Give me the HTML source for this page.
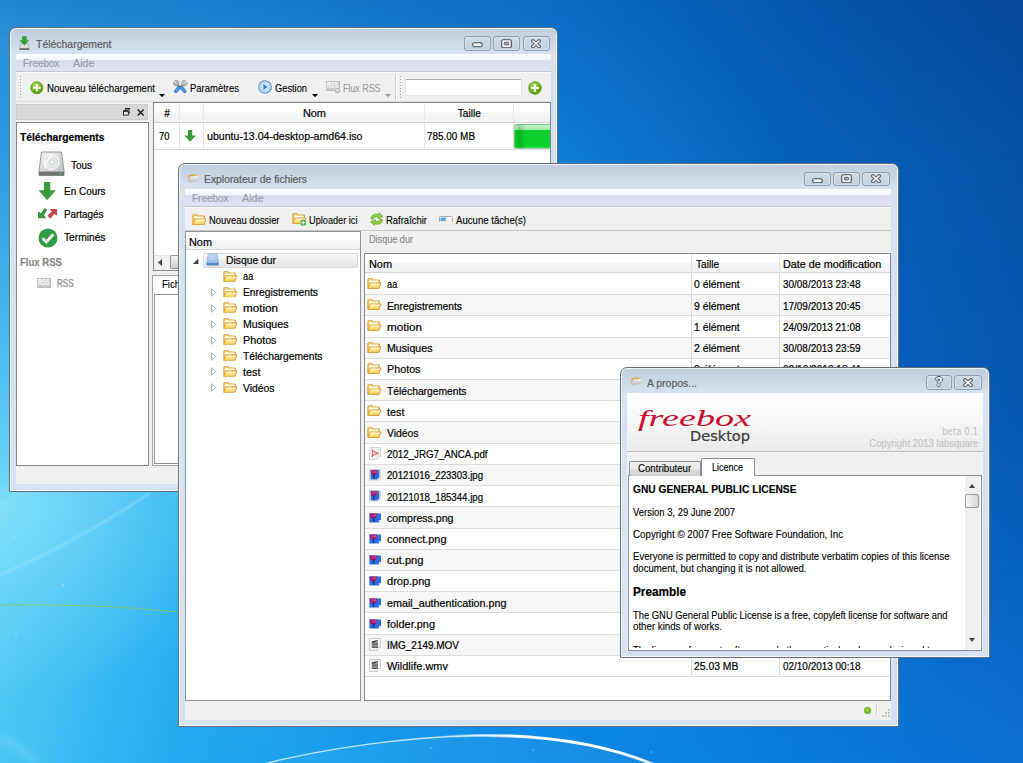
<!DOCTYPE html>
<html lang="fr"><head><meta charset="utf-8"><title>Freebox Desktop</title>
<style>
html,body{margin:0;padding:0}
body{width:1023px;height:763px;overflow:hidden;position:relative;
background:linear-gradient(90deg,#4cc6f5 0,#22aaf0 17.6%,#0d8de8 50%,#0a7bdc 78%,#0b70d2 100%);}
#bgm{left:0;top:0;width:1023px;height:763px;background:linear-gradient(90deg,#60d0f6 0,#36b6f0 17.6%,#1088e0 55%,#0868c4 77%,#0760bc 88%,#0658b3 100%);-webkit-mask-image:linear-gradient(to bottom,#000 0,#000 430px,transparent 763px);mask-image:linear-gradient(to bottom,#000 0,#000 430px,transparent 763px)}
#bgt{left:0;top:0;width:1023px;height:430px;background:linear-gradient(90deg,#1f86d2 0,#1479cc 29%,#0a6ac4 55%,#0556ae 78%,#064a97 100%);-webkit-mask-image:linear-gradient(to bottom,#000 0,rgba(0,0,0,.36) 165px,transparent 430px);mask-image:linear-gradient(to bottom,#000 0,rgba(0,0,0,.36) 165px,transparent 430px)}
#bgl{left:0;top:250px;width:400px;height:513px;background:radial-gradient(ellipse 300px 200px at -20px 250px,rgba(160,238,252,.6) 0,rgba(140,230,250,.3) 50%,rgba(120,220,250,0) 100%)}
div,span,svg{position:absolute;box-sizing:border-box}
span{white-space:pre;-webkit-text-stroke:.2px}
.win{border:1px solid #666c75;border-radius:7px 7px 1px 1px;background:linear-gradient(#bfcedd 0,#c8d5e4 10px,#d7e3f1 26px,#d6e2f0 40px,#d6e2f0 100%);box-shadow:inset 0 0 0 1px rgba(255,255,255,.8)}
.cl{background:#f0f0f0;overflow:hidden}
.mb{background:linear-gradient(#fdfeff 0,#f1f3fa 33%,#d7dbee 37%,#e1e5f5 91%,#c3c7d8 95%,#c3c7d8 100%)}
.cb{border:1px solid #8d9bb3;border-radius:3px;background:linear-gradient(#cfdae8,#c4d0e0);box-shadow:inset 0 0 0 1px rgba(255,255,255,.3)}
.hd{background:linear-gradient(#fff 0,#fff 45%,#f4f5f6 55%,#f1f2f4 100%);border-bottom:1px solid #d5d5d5}
.vs{width:1px;background:#e0e3e8}
</style></head><body>
<div id="bgm"></div><div id="bgt"></div><div id="bgl"></div><div style="left:0;top:28px;width:10px;height:472px;background:linear-gradient(#2590d8 0,#2a9be0 122px,#3fb5ea 272px,#62cef4 422px,#7adbf8 472px);-webkit-mask-image:linear-gradient(to bottom,transparent 0,#000 40px);mask-image:linear-gradient(to bottom,transparent 0,#000 40px)"></div>
<svg style="left:0px;top:0px;" width="1023" height="763" viewBox="0 0 1023 763" preserveAspectRatio="none">
<defs>
<linearGradient id="sw" gradientUnits="userSpaceOnUse" x1="440" y1="0" x2="655" y2="0"><stop offset="0" stop-color="#fff" stop-opacity="0"/><stop offset=".35" stop-color="#fff" stop-opacity=".9"/><stop offset=".8" stop-color="#fff" stop-opacity=".95"/><stop offset="1" stop-color="#fff" stop-opacity=".7"/></linearGradient><filter id="bl0" x="-10%" y="-50%" width="120%" height="200%"><feGaussianBlur stdDeviation=".6"/></filter>
<filter id="bl" x="-10%" y="-50%" width="120%" height="200%"><feGaussianBlur stdDeviation="1.2"/></filter>
<filter id="bl2" x="-10%" y="-50%" width="120%" height="200%"><feGaussianBlur stdDeviation="4"/></filter>
</defs>
<path d="M0 575 Q80 540 150 493" stroke="#d4f4fe" stroke-opacity=".42" stroke-width="1.6" fill="none" filter="url(#bl)"/>
<path d="M0 605 Q90 603 178 612" stroke="#86cf4e" stroke-opacity=".75" stroke-width="1" fill="none"/>
<path d="M255 766 C330 747 410 737 475 735.5 C540 734.5 600 742 658 766 Z" fill="#ffffff" fill-opacity=".05"/>
<path d="M255 766 C330 747 410 737 475 735.5 C540 734.5 600 742 658 766" stroke="#e8f6ff" stroke-opacity=".8" stroke-width="1.3" fill="none" filter="url(#bl0)"/>
<path d="M440 736.6 C455 736 465 735.7 475 735.5 C540 734.5 600 742 655 765" stroke="url(#sw)" stroke-width="3" fill="none" filter="url(#bl0)"/>
<path d="M0 738 Q22 746 36 763" stroke="#c6ecfc" stroke-opacity=".35" stroke-width="5" fill="none" filter="url(#bl2)"/>
<g fill="#fff" fill-opacity=".55"><circle cx="63" cy="585.5" r=".9"/><circle cx="15" cy="538" r=".7"/><circle cx="16" cy="634" r=".8"/><circle cx="2" cy="538" r=".6"/><circle cx="431" cy="748" r=".7"/><circle cx="533" cy="750" r=".7"/><circle cx="651" cy="752" r=".7"/></g>
</svg>
<div class="win" style="left:9px;top:27px;width:549px;height:464.5px;">
<svg style="left:9.4px;top:8px;" width="10.8" height="14.2" viewBox="0 0 10.8 14.2" preserveAspectRatio="none"><path d="M.7 10.6 L2 7.4 H8.8 L10.1 10.6 V12.6 H.7 Z" fill="#dedede" stroke="#a2a2a2" stroke-width=".7"/><rect x=".5" y="12.5" width="9.8" height="1.3" fill="#4c4c4c"/><path d="M3.1 .2 H7.7 V4.2 H10.2 L5.4 9.6 L.6 4.2 H3.1 Z" fill="#33a035"/></svg>
<span style='left:26.00px;top:8.00px;color:#5a5a5a;font:10.8px "Liberation Sans", sans-serif;line-height:15px;transform:translateY(0.71px) scaleX(0.9676);transform-origin:0 50%;'>Téléchargement</span>
<div class="cb" style="left:454px;top:8px;width:26.5px;height:14.5px;"></div>
<svg style="left:461.75px;top:14.3px;" width="11" height="5.4" viewBox="0 0 11 5.4" preserveAspectRatio="none"><rect x=".7" y=".7" width="9.6" height="4" rx="1.6" fill="#f6f7f9" stroke="#4a4f57" stroke-width="1.1"/></svg>
<div class="cb" style="left:483.3px;top:8px;width:26.5px;height:14.5px;"></div>
<svg style="left:491.05px;top:10.6px;" width="11" height="9.4" viewBox="0 0 11 9.4" preserveAspectRatio="none"><rect x=".7" y=".7" width="9.6" height="8" rx="1.4" fill="#f6f7f9" stroke="#4a4f57" stroke-width="1.1"/><rect x="3.4" y="3.3" width="4.2" height="2.6" rx=".5" fill="#aebccd" stroke="#4a4f57" stroke-width=".9"/></svg>
<div class="cb" style="left:512.5px;top:8px;width:27px;height:14.5px;"></div>
<svg style="left:520.0px;top:10.6px;" width="12" height="9.4" viewBox="0 0 12 9.4" preserveAspectRatio="none"><path d="M2.9 2 L9.1 7.4 M9.1 2 L2.9 7.4" stroke="#4a4f57" stroke-width="3.6" stroke-linecap="round"/><path d="M2.9 2 L9.1 7.4 M9.1 2 L2.9 7.4" stroke="#f6f7f9" stroke-width="1.7" stroke-linecap="round"/></svg>
<div class="cl" style="left:6px;top:26px;width:535px;height:430px;">
<div class="mb" style="left:0px;top:0px;width:535px;height:18px;"></div>
<span style='left:7.00px;top:2.00px;color:#9b9ba8;font:10.8px "Liberation Sans", sans-serif;line-height:15px;transform:translateY(0.01px) scaleX(0.9215);transform-origin:0 50%;'>Freebox</span>
<span style='left:57.00px;top:2.00px;color:#9b9ba8;font:10.8px "Liberation Sans", sans-serif;line-height:15px;transform:translateY(0.01px) scaleX(0.9942);transform-origin:0 50%;'>Aide</span>
<div style="left:0px;top:18px;width:535px;height:30px;background:#f0f0f0;border-top:1px solid #fafafa;border-bottom:1px solid #dcdcdc"></div>
<svg style="left:3.5px;top:22px;" width="3" height="24" viewBox="0 0 3 24" preserveAspectRatio="none"><rect x="0" y="0" width="1" height="1" fill="#a0a0a0"/><rect x="1" y="1" width="1" height="1" fill="#fff"/><rect x="0" y="3" width="1" height="1" fill="#a0a0a0"/><rect x="1" y="4" width="1" height="1" fill="#fff"/><rect x="0" y="6" width="1" height="1" fill="#a0a0a0"/><rect x="1" y="7" width="1" height="1" fill="#fff"/><rect x="0" y="9" width="1" height="1" fill="#a0a0a0"/><rect x="1" y="10" width="1" height="1" fill="#fff"/><rect x="0" y="12" width="1" height="1" fill="#a0a0a0"/><rect x="1" y="13" width="1" height="1" fill="#fff"/><rect x="0" y="15" width="1" height="1" fill="#a0a0a0"/><rect x="1" y="16" width="1" height="1" fill="#fff"/><rect x="0" y="18" width="1" height="1" fill="#a0a0a0"/><rect x="1" y="19" width="1" height="1" fill="#fff"/><rect x="0" y="21" width="1" height="1" fill="#a0a0a0"/><rect x="1" y="22" width="1" height="1" fill="#fff"/></svg>
<svg style="left:14.2px;top:26.7px;" width="13.6" height="13.6" viewBox="0 0 14 14" preserveAspectRatio="none"><defs><radialGradient id="gp" cx=".4" cy=".3" r=".8"><stop offset="0" stop-color="#b4e05a"/><stop offset=".6" stop-color="#6db31c"/><stop offset="1" stop-color="#4c8f10"/></radialGradient></defs>
<circle cx="7" cy="7" r="6.2" fill="url(#gp)" stroke="#4f9410" stroke-width=".9"/><path d="M3.2 7 H10.8 M7 3.2 V10.8" stroke="#fff" stroke-width="2"/></svg>
<span style='left:31.00px;top:26.00px;color:#000;font:10.6px "Liberation Sans", sans-serif;line-height:15px;transform:translateY(0.66px) scaleX(0.9124);transform-origin:0 50%;-webkit-text-stroke:.12px;'>Nouveau téléchargement</span>
<svg style="left:143px;top:39.8px;" width="6" height="3.5" viewBox="0 0 6 3.5" preserveAspectRatio="none"><path d="M0 0 H6 L3 3.2 Z" fill="#000"/></svg>
<svg style="left:157px;top:26.3px;" width="14.5" height="13.3" viewBox="0 0 14.5 13.3" preserveAspectRatio="none"><path d="M7.4 7.6 L3.8 4.4 M7.1 7.6 L10.7 4.4" stroke="#8a8a8a" stroke-width="2.4" stroke-linecap="round"/><circle cx="3.1" cy="3.1" r="2.7" fill="#b9b9b9" stroke="#858585" stroke-width=".7"/><path d="M3 3.2 L.2 1.4 L1.6 -.2 Z" fill="#f0f0f0"/><circle cx="11.4" cy="3.1" r="2.7" fill="#c2c2c2" stroke="#858585" stroke-width=".7"/><path d="M11.5 3.2 L14.3 1.4 L12.9 -.2 Z" fill="#f0f0f0"/><path d="M6.3 7.6 L2.7 11.2" stroke="#2f6fb4" stroke-width="3.5" stroke-linecap="round"/><path d="M6.3 7.6 L2.7 11.2" stroke="#4aa0ea" stroke-width="2.3" stroke-linecap="round"/><path d="M8.2 7.6 L11.8 11.2" stroke="#2f6fb4" stroke-width="3.5" stroke-linecap="round"/><path d="M8.2 7.6 L11.8 11.2" stroke="#4aa0ea" stroke-width="2.3" stroke-linecap="round"/></svg>
<span style='left:174.00px;top:26.00px;color:#000;font:10.6px "Liberation Sans", sans-serif;line-height:15px;transform:translateY(0.66px) scaleX(0.8947);transform-origin:0 50%;-webkit-text-stroke:.12px;'>Paramètres</span>
<svg style="left:241.7px;top:26.1px;" width="14" height="14" viewBox="0 0 14 14" preserveAspectRatio="none"><defs><radialGradient id="pg" cx=".5" cy=".4" r=".6"><stop offset="0" stop-color="#ffffff"/><stop offset="1" stop-color="#c4dcf5"/></radialGradient></defs><circle cx="7" cy="7" r="6.3" fill="url(#pg)" stroke="#4a8fd8" stroke-width="1.1"/><circle cx="7" cy="7" r="4.1" fill="#d7e8fa" stroke="#8ab8ea" stroke-width=".6"/><path d="M5.4 4.2 L9.6 7 L5.4 9.8 Z" fill="#2d7bd0"/></svg>
<span style='left:259.00px;top:26.00px;color:#000;font:10.6px "Liberation Sans", sans-serif;line-height:15px;transform:translateY(0.66px) scaleX(0.8763);transform-origin:0 50%;-webkit-text-stroke:.12px;'>Gestion</span>
<svg style="left:295.7px;top:39.8px;" width="6" height="3.5" viewBox="0 0 6 3.5" preserveAspectRatio="none"><path d="M0 0 H6 L3 3.2 Z" fill="#000"/></svg>
<div style="left:310px;top:26.5px;width:13.5px;height:10.4px;background:#cacaca;border:1px solid #bdbdbd"></div>
<span style='left:311.30px;top:25.00px;color:#fff;font:bold 8.6px "Liberation Sans", sans-serif;line-height:12px;transform:translateY(0.24px) scaleX(0.6225);transform-origin:0 50%;-webkit-text-stroke:0;'>RSS</span>
<svg style="left:317.5px;top:33px;" width="7" height="7" viewBox="0 0 7 7" preserveAspectRatio="none"><circle cx="3.5" cy="3.5" r="3" fill="#b4b4b4" stroke="#efefef" stroke-width=".7"/><path d="M1.8 2.8 H5.2 L3.5 5 Z" fill="#fff"/></svg>
<span style='left:327.00px;top:26.00px;color:#9a9a9a;font:10.6px "Liberation Sans", sans-serif;line-height:15px;transform:translateY(0.66px) scaleX(0.8380);transform-origin:0 50%;-webkit-text-stroke:.12px;'>Flux RSS</span>
<svg style="left:369px;top:39.8px;" width="6" height="3.5" viewBox="0 0 6 3.5" preserveAspectRatio="none"><path d="M0 0 H6 L3 3.2 Z" fill="#9a9a9a"/></svg>
<div style="left:379px;top:20px;width:1px;height:26px;background:#cfcfcf"></div>
<div style="left:380px;top:20px;width:1px;height:26px;background:#fff"></div>
<svg style="left:384px;top:22px;" width="3" height="24" viewBox="0 0 3 24" preserveAspectRatio="none"><rect x="0" y="0" width="1" height="1" fill="#a0a0a0"/><rect x="1" y="1" width="1" height="1" fill="#fff"/><rect x="0" y="3" width="1" height="1" fill="#a0a0a0"/><rect x="1" y="4" width="1" height="1" fill="#fff"/><rect x="0" y="6" width="1" height="1" fill="#a0a0a0"/><rect x="1" y="7" width="1" height="1" fill="#fff"/><rect x="0" y="9" width="1" height="1" fill="#a0a0a0"/><rect x="1" y="10" width="1" height="1" fill="#fff"/><rect x="0" y="12" width="1" height="1" fill="#a0a0a0"/><rect x="1" y="13" width="1" height="1" fill="#fff"/><rect x="0" y="15" width="1" height="1" fill="#a0a0a0"/><rect x="1" y="16" width="1" height="1" fill="#fff"/><rect x="0" y="18" width="1" height="1" fill="#a0a0a0"/><rect x="1" y="19" width="1" height="1" fill="#fff"/><rect x="0" y="21" width="1" height="1" fill="#a0a0a0"/><rect x="1" y="22" width="1" height="1" fill="#fff"/></svg>
<div style="left:389px;top:24.5px;width:117px;height:17.5px;background:#fff;border:1px solid #e1e4e8;border-top-color:#abadb3;border-radius:2px"></div>
<svg style="left:512.0px;top:26.5px;" width="14.0" height="14.0" viewBox="0 0 14 14" preserveAspectRatio="none"><defs><radialGradient id="gp" cx=".4" cy=".3" r=".8"><stop offset="0" stop-color="#b4e05a"/><stop offset=".6" stop-color="#6db31c"/><stop offset="1" stop-color="#4c8f10"/></radialGradient></defs>
<circle cx="7" cy="7" r="6.2" fill="url(#gp)" stroke="#4f9410" stroke-width=".9"/><path d="M3.2 7 H10.8 M7 3.2 V10.8" stroke="#fff" stroke-width="2"/></svg>
<div style="left:0px;top:50px;width:132px;height:16px;background:#d8d8d8;border:1px solid #cacaca"></div>
<svg style="left:106.8px;top:54.3px;" width="7.6" height="7.6" viewBox="0 0 7.6 7.6" preserveAspectRatio="none"><path d="M2.4 2.2 V.5 H7.1 V4.7 H5.4" fill="none" stroke="#1a1a1a" stroke-width=".9"/><rect x=".5" y="2.7" width="4.8" height="4.4" fill="#e8e8e8" stroke="#1a1a1a" stroke-width=".9"/><path d="M.5 3.1 H5.3 M2.4 .9 H7.1" stroke="#1a1a1a" stroke-width="1.2"/></svg>
<svg style="left:121px;top:54.6px;" width="7.4" height="7" viewBox="0 0 7.4 7" preserveAspectRatio="none"><path d="M.7 .5 L6.7 6.5 M6.7 .5 L.7 6.5" stroke="#111" stroke-width="1.3"/></svg>
<div style="left:0px;top:68px;width:132.5px;height:344px;background:#fff;border:1px solid #828790"></div>
<span style='left:3.70px;top:75.00px;color:#000;font:bold 10.8px "Liberation Sans", sans-serif;line-height:15px;transform:translateY(0.81px) scaleX(0.9514);transform-origin:0 50%;'>Téléchargements</span>
<svg style="left:22px;top:97px;" width="27" height="26" viewBox="0 0 27 26" preserveAspectRatio="none"><defs><linearGradient id="hd" x1="0" y1="0" x2="1" y2="1"><stop offset="0" stop-color="#f2f3f3"/><stop offset="1" stop-color="#b8bcbc"/></linearGradient></defs>
<path d="M3.5 1 H23.5 L26 20 V24.5 H1 V20 Z" fill="url(#hd)" stroke="#8b8f8f" stroke-width=".9"/>
<path d="M1 20 H26 V24.5 H1 Z" fill="#6f7474"/><path d="M1.5 20.3 H25.5" stroke="#d8dada" stroke-width=".7"/>
<circle cx="13.5" cy="11" r="7.6" fill="#e3e5e5" stroke="#fff" stroke-width="1"/><circle cx="13.5" cy="11" r="2" fill="#f8f8f8" stroke="#c0c4c4" stroke-width=".6"/>
<path d="M7 17.5 Q8 8 15 4" stroke="#fafafa" stroke-width="1.6" fill="none"/><rect x="21.5" y="22" width="2" height="1.2" fill="#5fd04a"/></svg>
<span style='left:55.00px;top:103.00px;color:#000;font:10.8px "Liberation Sans", sans-serif;line-height:15px;transform:translateY(0.71px) scaleX(0.9205);transform-origin:0 50%;'>Tous</span>
<svg style="left:22.4px;top:127.6px;" width="18.2" height="18.6" viewBox="0 0 20 20" preserveAspectRatio="none"><path d="M6.5 0 H13.5 V9 H19.5 L10 19.5 L0.5 9 H6.5 Z" fill="#3a9a3a"/></svg>
<span style='left:47.70px;top:130.00px;color:#000;font:10.8px "Liberation Sans", sans-serif;line-height:15px;transform:translateY(0.21px) scaleX(0.9219);transform-origin:0 50%;'>En Cours</span>
<svg style="left:22.1px;top:154.4px;" width="19.2" height="11" viewBox="0 0 19.2 11" preserveAspectRatio="none"><path d="M0 3.4 L3.1 5.2 L6.8 0 L9.3 2.1 L6 7.1 L8.1 10.2 L0 10.2 Z" fill="#3a9440"/><path d="M11.8 .9 L19 .9 L19 7.7 L16.2 5.8 L12.4 10.8 L9.3 7.7 L13.7 3.4 Z" fill="#c1474d"/></svg>
<span style='left:47.70px;top:153.00px;color:#000;font:10.8px "Liberation Sans", sans-serif;line-height:15px;transform:translateY(0.01px) scaleX(0.9140);transform-origin:0 50%;'>Partagés</span>
<svg style="left:21.5px;top:173.5px;" width="20" height="20" viewBox="0 0 20 20" preserveAspectRatio="none"><circle cx="10" cy="10" r="9.5" fill="#2f9e44"/><path d="M4.6 10.3 L8.3 14 L15.4 6.2" stroke="#fff" stroke-width="2.8" fill="none"/></svg>
<span style='left:47.70px;top:176.00px;color:#000;font:10.8px "Liberation Sans", sans-serif;line-height:15px;transform:translateY(0.01px) scaleX(0.9472);transform-origin:0 50%;'>Terminés</span>
<span style='left:3.70px;top:200.00px;color:#888;font:bold 10.8px "Liberation Sans", sans-serif;line-height:15px;transform:translateY(0.91px) scaleX(0.8860);transform-origin:0 50%;'>Flux RSS</span>
<div style="left:20.8px;top:223.6px;width:14px;height:10.6px;background:#cacaca;border:1px solid #bdbdbd"></div>
<span style='left:22.20px;top:222.00px;color:#fff;font:bold 8.6px "Liberation Sans", sans-serif;line-height:12px;transform:translateY(0.44px) scaleX(0.6451);transform-origin:0 50%;-webkit-text-stroke:0;'>RSS</span>
<span style='left:41.00px;top:221.00px;color:#8a8a8a;font:10.8px "Liberation Sans", sans-serif;line-height:15px;transform:translateY(0.91px) scaleX(0.7431);transform-origin:0 50%;'>RSS</span>
<div style="left:136.5px;top:48px;width:410px;height:168.6px;background:#fff;border:1px solid #828790"></div>
<div class="hd" style="left:137.5px;top:49px;width:408px;height:19.5px;"></div>
<div style="left:163px;top:50px;width:1px;height:18px;background:#e6e8ec"></div>
<div style="left:163px;top:69px;width:1px;height:26px;background:#e4e4e4"></div>
<div style="left:187px;top:50px;width:1px;height:18px;background:#e6e8ec"></div>
<div style="left:187px;top:69px;width:1px;height:26px;background:#e4e4e4"></div>
<div style="left:408px;top:50px;width:1px;height:18px;background:#e6e8ec"></div>
<div style="left:408px;top:69px;width:1px;height:26px;background:#e4e4e4"></div>
<div style="left:496.5px;top:50px;width:1px;height:18px;background:#e6e8ec"></div>
<div style="left:496.5px;top:69px;width:1px;height:26px;background:#e4e4e4"></div>
<div style="left:137.5px;top:94.8px;width:408px;height:1px;background:#dcdcdc"></div>
<span style='left:148.49px;top:52.00px;color:#000;font:10.8px "Liberation Sans", sans-serif;line-height:15px;transform:translateY(0.41px) scaleX(0.9300);transform-origin:50% 50%;'>#</span>
<span style='left:286.60px;top:52.00px;color:#000;font:10.8px "Liberation Sans", sans-serif;line-height:15px;transform:translateY(0.41px) scaleX(1.0089);transform-origin:50% 50%;'>Nom</span>
<span style='left:441.20px;top:52.00px;color:#000;font:10.8px "Liberation Sans", sans-serif;line-height:15px;transform:translateY(0.41px) scaleX(0.9346);transform-origin:50% 50%;'>Taille</span>
<span style='left:143.00px;top:75.00px;color:#000;font:10.8px "Liberation Sans", sans-serif;line-height:15px;transform:translateY(0.11px) scaleX(0.8739);transform-origin:0 50%;'>70</span>
<svg style="left:167.8px;top:76.3px;" width="12.2" height="12" viewBox="0 0 20 20" preserveAspectRatio="none"><path d="M6.5 0 H13.5 V9 H19.5 L10 19.5 L0.5 9 H6.5 Z" fill="#3a9a3a"/></svg>
<span style='left:191.00px;top:75.00px;color:#000;font:10.8px "Liberation Sans", sans-serif;line-height:15px;transform:translateY(0.11px) scaleX(0.9813);transform-origin:0 50%;'>ubuntu-13.04-desktop-amd64.iso</span>
<span style='left:411.00px;top:75.00px;color:#000;font:10.8px "Liberation Sans", sans-serif;line-height:15px;transform:translateY(0.11px) scaleX(0.9192);transform-origin:0 50%;'>785.00 MB</span>
<div style="left:497.8px;top:70px;width:40px;height:25.2px;background:linear-gradient(90deg,rgba(0,70,0,.05) 0,rgba(0,70,0,.22) 5px,rgba(0,70,0,0) 11px),linear-gradient(#c9f5cd 0,#a2eeab 20%,#12cf33 23%,#06d22a 90%,#3add55 100%);border:1px solid rgba(150,190,150,.6);border-radius:2px 0 0 2px"></div>
<div style="left:534px;top:49px;width:1px;height:167px;background:#828790"></div>
<div style="left:137.5px;top:200.5px;width:408px;height:15px;background:#efefef;border-top:1px solid #e3e3e3"></div>
<svg style="left:142px;top:204.5px;" width="4" height="7" viewBox="0 0 4 7" preserveAspectRatio="none"><path d="M4 0 V7 L0 3.5 Z" fill="#404040"/></svg>
<div style="left:153.5px;top:201px;width:40px;height:14px;background:linear-gradient(#f5f5f5,#e2e2e2 50%,#d0d0d0);border:1px solid #989898;border-radius:2px"></div>
<div style="left:136.2px;top:221.2px;width:410px;height:191px;background:#fff;border:1px solid #a0a3aa"></div>
<span style='left:146.00px;top:222.00px;color:#000;font:10.6px "Liberation Sans", sans-serif;line-height:15px;transform:translateY(0.96px) scaleX(0.9000);transform-origin:0 50%;-webkit-text-stroke:.12px;'>Fich</span>
<div style="left:138.3px;top:240.4px;width:404px;height:170px;background:#fff;border:1px solid #8e9199"></div>
</div>
</div>
<div class="win" style="left:178px;top:163px;width:720.5px;height:563.5px;">
<svg style="left:8.8px;top:10.2px;" width="11.4" height="8.8" viewBox="0 0 11.4 8.8" preserveAspectRatio="none"><defs><linearGradient id="tf" x1="0" y1="0" x2="0" y2="1"><stop offset="0" stop-color="#f6f6f6"/><stop offset="1" stop-color="#b9b9b9"/></linearGradient></defs><path d="M.3 8 L.5 1.2 L5 .3 L11 .9 L10.6 2 L2 3 Z" fill="#dba548"/><path d="M.8 8.4 L2 2.6 L10.9 1.6 L10.2 7 Z" fill="url(#tf)" stroke="#c9c9c9" stroke-width=".4"/></svg>
<span style='left:25.00px;top:8.00px;color:#5a5a5a;font:10.8px "Liberation Sans", sans-serif;line-height:15px;transform:translateY(0.01px) scaleX(0.9588);transform-origin:0 50%;'>Explorateur de fichiers</span>
<div class="cb" style="left:625.3px;top:7.5px;width:26.5px;height:14.5px;"></div>
<svg style="left:633.05px;top:13.8px;" width="11" height="5.4" viewBox="0 0 11 5.4" preserveAspectRatio="none"><rect x=".7" y=".7" width="9.6" height="4" rx="1.6" fill="#f6f7f9" stroke="#4a4f57" stroke-width="1.1"/></svg>
<div class="cb" style="left:654px;top:7.5px;width:26.5px;height:14.5px;"></div>
<svg style="left:661.75px;top:10.1px;" width="11" height="9.4" viewBox="0 0 11 9.4" preserveAspectRatio="none"><rect x=".7" y=".7" width="9.6" height="8" rx="1.4" fill="#f6f7f9" stroke="#4a4f57" stroke-width="1.1"/><rect x="3.4" y="3.3" width="4.2" height="2.6" rx=".5" fill="#aebccd" stroke="#4a4f57" stroke-width=".9"/></svg>
<div class="cb" style="left:683px;top:7.5px;width:27.5px;height:14.5px;"></div>
<svg style="left:690.75px;top:10.1px;" width="12" height="9.4" viewBox="0 0 12 9.4" preserveAspectRatio="none"><path d="M2.9 2 L9.1 7.4 M9.1 2 L2.9 7.4" stroke="#4a4f57" stroke-width="3.6" stroke-linecap="round"/><path d="M2.9 2 L9.1 7.4 M9.1 2 L2.9 7.4" stroke="#f6f7f9" stroke-width="1.7" stroke-linecap="round"/></svg>
<div class="cl" style="left:6px;top:25px;width:706px;height:530.5px;">
<div class="mb" style="left:0px;top:0px;width:706px;height:18.3px;"></div>
<span style='left:7.00px;top:2.00px;color:#9b9ba8;font:10.8px "Liberation Sans", sans-serif;line-height:15px;transform:translateY(0.21px) scaleX(0.9215);transform-origin:0 50%;'>Freebox</span>
<span style='left:57.00px;top:2.00px;color:#9b9ba8;font:10.8px "Liberation Sans", sans-serif;line-height:15px;transform:translateY(0.21px) scaleX(0.9942);transform-origin:0 50%;'>Aide</span>
<div style="left:0px;top:18.3px;width:706px;height:23.7px;background:#f0f0f0;border-top:1px solid #fafafa;border-bottom:1px solid #c6c6c6"></div>
<svg style="left:6.5px;top:24.5px;" width="14.8" height="11.2" viewBox="0 0 14.8 11.2" preserveAspectRatio="none"><defs><linearGradient id="fg" x1="0" y1="0" x2="0" y2="1"><stop offset="0" stop-color="#fff4b4"/><stop offset="1" stop-color="#f8d258"/></linearGradient></defs>
<path d="M.9 10 V1.7 Q.9 .8 1.8 .8 H4.6 Q5.4 .8 5.8 1.5 L6.2 2.1 H11.6 Q12.5 2.1 12.5 3 V5" fill="#f8dc86" stroke="#dba03a" stroke-width="1.1"/><path d="M2.2 4.6 V2.6 H11.2 V4.6" fill="#fffdf0" stroke="none"/>
<path d="M.9 10.5 L3 5 H14.1 L12 10.5 Z" fill="url(#fg)" stroke="#dca43e" stroke-width="1.1" stroke-linejoin="round"/><path d="M3.6 6.1 H12.8" stroke="#fffbe0" stroke-width=".8"/></svg>
<span style='left:23.80px;top:24.00px;color:#000;font:10.6px "Liberation Sans", sans-serif;line-height:15px;transform:translateY(0.06px) scaleX(0.8868);transform-origin:0 50%;-webkit-text-stroke:.12px;'>Nouveau dossier</span>
<svg style="left:106.5px;top:23.5px;" width="14.8" height="13.2" viewBox="0 0 14.8 13.2" preserveAspectRatio="none"><defs><linearGradient id="fg" x1="0" y1="0" x2="0" y2="1"><stop offset="0" stop-color="#fff4b4"/><stop offset="1" stop-color="#f8d258"/></linearGradient></defs>
<path d="M.9 10 V1.7 Q.9 .8 1.8 .8 H4.6 Q5.4 .8 5.8 1.5 L6.2 2.1 H11.6 Q12.5 2.1 12.5 3 V5" fill="#f8dc86" stroke="#dba03a" stroke-width="1.1"/><path d="M2.2 4.6 V2.6 H11.2 V4.6" fill="#fffdf0" stroke="none"/>
<path d="M.9 10.5 L3 5 H14.1 L12 10.5 Z" fill="url(#fg)" stroke="#dca43e" stroke-width="1.1" stroke-linejoin="round"/><path d="M3.6 6.1 H12.8" stroke="#fffbe0" stroke-width=".8"/><circle cx="11.4" cy="9.7" r="3.3" fill="#3fa52c" stroke="#e8f4e0" stroke-width=".5"/><path d="M9.5 9.7 H13.3 M11.4 7.8 V11.6" stroke="#fff" stroke-width="1.2"/></svg>
<span style='left:123.70px;top:24.00px;color:#000;font:10.6px "Liberation Sans", sans-serif;line-height:15px;transform:translateY(0.06px) scaleX(0.8668);transform-origin:0 50%;-webkit-text-stroke:.12px;'>Uploader ici</span>
<svg style="left:184.8px;top:22.6px;" width="13.6" height="14.4" viewBox="0 0 14 13" preserveAspectRatio="none"><path d="M1 6 Q2 1.5 7 2 L9.5 2.6 L9.2 .6 L13.4 4 L8.4 6.2 L8.9 4.4 Q4.6 3.6 3 6.8 Z" fill="#93d24a" stroke="#5ea322" stroke-width=".7"/><path d="M13 7 Q12 11.5 7 11 L4.5 10.4 L4.8 12.4 L.6 9 L5.6 6.8 L5.1 8.6 Q9.4 9.4 11 6.2 Z" fill="#93d24a" stroke="#5ea322" stroke-width=".7"/></svg>
<span style='left:201.00px;top:24.00px;color:#000;font:10.6px "Liberation Sans", sans-serif;line-height:15px;transform:translateY(0.06px) scaleX(0.8928);transform-origin:0 50%;-webkit-text-stroke:.12px;'>Rafraîchir</span>
<svg style="left:254.2px;top:26.6px;" width="13.8" height="6.8" viewBox="0 0 13.8 6.8" preserveAspectRatio="none"><rect x=".5" y=".5" width="12.8" height="5.8" rx=".8" fill="#fafbfc" stroke="#9aa0a8" stroke-width=".9"/><rect x="1.6" y="1.6" width="5.2" height="3.4" fill="#4a8fe0"/><path d="M2.6 1.6 L1.8 5 M4.4 1.6 L3.6 5 M6.2 1.6 L5.4 5" stroke="#8cbcf0" stroke-width=".6"/></svg>
<span style='left:271.00px;top:24.00px;color:#000;font:10.6px "Liberation Sans", sans-serif;line-height:15px;transform:translateY(0.06px) scaleX(0.9072);transform-origin:0 50%;-webkit-text-stroke:.12px;'>Aucune tâche(s)</span>
<div style="left:0px;top:41.8px;width:175.5px;height:469.8px;background:#fff;border:1px solid #8e929b"></div>
<div class="hd" style="left:1px;top:42.8px;width:173.5px;height:18.6px;"></div>
<span style='left:4.40px;top:45.00px;color:#000;font:10.8px "Liberation Sans", sans-serif;line-height:15px;transform:translateY(0.71px) scaleX(1.0089);transform-origin:0 50%;'>Nom</span>
<div style="left:17.8px;top:63.5px;width:155.7px;height:15.5px;background:linear-gradient(#f8f8f8,#e5e5e5);border:1px solid #d9d9d9;border-radius:2px"></div>
<svg style="left:8px;top:69.5px;" width="5.5" height="5.5" viewBox="0 0 5.5 5.5" preserveAspectRatio="none"><path d="M5 .3 V5 H.3 Z" fill="#404040" stroke="#262626" stroke-width=".6"/></svg>
<svg style="left:21.4px;top:64.2px;" width="13.2" height="13" viewBox="0 0 13.2 13" preserveAspectRatio="none"><defs><linearGradient id="dk" x1="0" y1="0" x2="0" y2="1"><stop offset="0" stop-color="#c3dcf3"/><stop offset="1" stop-color="#8ab6e4"/></linearGradient></defs><path d="M2.3 .8 H10.9 L12.6 9.6 V12.2 H.6 V9.6 Z" fill="url(#dk)" stroke="#86acd6" stroke-width=".7"/><path d="M.8 9.9 H12.4 V12.2 H.8 Z" fill="#5688c2"/><circle cx="6.6" cy="5.6" r=".9" fill="#dcebf8"/></svg>
<span style='left:40.50px;top:63.00px;color:#000;font:10.8px "Liberation Sans", sans-serif;line-height:15px;transform:translateY(0.91px) scaleX(0.9575);transform-origin:0 50%;'>Disque dur</span>
<svg style="left:38.3px;top:81.6px;" width="14.504" height="10.975999999999999" viewBox="0 0 14.8 11.2" preserveAspectRatio="none"><defs><linearGradient id="fg" x1="0" y1="0" x2="0" y2="1"><stop offset="0" stop-color="#fff4b4"/><stop offset="1" stop-color="#f8d258"/></linearGradient></defs>
<path d="M.9 10 V1.7 Q.9 .8 1.8 .8 H4.6 Q5.4 .8 5.8 1.5 L6.2 2.1 H11.6 Q12.5 2.1 12.5 3 V5" fill="#f8dc86" stroke="#dba03a" stroke-width="1.1"/><path d="M2.2 4.6 V2.6 H11.2 V4.6" fill="#fffdf0" stroke="none"/>
<path d="M.9 10.5 L3 5 H14.1 L12 10.5 Z" fill="url(#fg)" stroke="#dca43e" stroke-width="1.1" stroke-linejoin="round"/><path d="M3.6 6.1 H12.8" stroke="#fffbe0" stroke-width=".8"/></svg>
<span style='left:58.00px;top:80.00px;color:#000;font:10.8px "Liberation Sans", sans-serif;line-height:15px;transform:translateY(0.11px) scaleX(0.8572);transform-origin:0 50%;'>aa</span>
<svg style="left:38.3px;top:97.53px;" width="14.504" height="10.975999999999999" viewBox="0 0 14.8 11.2" preserveAspectRatio="none"><defs><linearGradient id="fg" x1="0" y1="0" x2="0" y2="1"><stop offset="0" stop-color="#fff4b4"/><stop offset="1" stop-color="#f8d258"/></linearGradient></defs>
<path d="M.9 10 V1.7 Q.9 .8 1.8 .8 H4.6 Q5.4 .8 5.8 1.5 L6.2 2.1 H11.6 Q12.5 2.1 12.5 3 V5" fill="#f8dc86" stroke="#dba03a" stroke-width="1.1"/><path d="M2.2 4.6 V2.6 H11.2 V4.6" fill="#fffdf0" stroke="none"/>
<path d="M.9 10.5 L3 5 H14.1 L12 10.5 Z" fill="url(#fg)" stroke="#dca43e" stroke-width="1.1" stroke-linejoin="round"/><path d="M3.6 6.1 H12.8" stroke="#fffbe0" stroke-width=".8"/></svg>
<span style='left:58.00px;top:96.00px;color:#000;font:10.8px "Liberation Sans", sans-serif;line-height:15px;transform:translateY(0.04px) scaleX(0.9539);transform-origin:0 50%;'>Enregistrements</span>
<svg style="left:26px;top:98.83px;" width="5.5" height="9" viewBox="0 0 5.5 9" preserveAspectRatio="none"><path d="M.6 .8 L4.6 4.5 L.6 8.2 Z" fill="#fff" stroke="#a5a5a5" stroke-width=".9"/></svg>
<svg style="left:38.3px;top:113.46px;" width="14.504" height="10.975999999999999" viewBox="0 0 14.8 11.2" preserveAspectRatio="none"><defs><linearGradient id="fg" x1="0" y1="0" x2="0" y2="1"><stop offset="0" stop-color="#fff4b4"/><stop offset="1" stop-color="#f8d258"/></linearGradient></defs>
<path d="M.9 10 V1.7 Q.9 .8 1.8 .8 H4.6 Q5.4 .8 5.8 1.5 L6.2 2.1 H11.6 Q12.5 2.1 12.5 3 V5" fill="#f8dc86" stroke="#dba03a" stroke-width="1.1"/><path d="M2.2 4.6 V2.6 H11.2 V4.6" fill="#fffdf0" stroke="none"/>
<path d="M.9 10.5 L3 5 H14.1 L12 10.5 Z" fill="url(#fg)" stroke="#dca43e" stroke-width="1.1" stroke-linejoin="round"/><path d="M3.6 6.1 H12.8" stroke="#fffbe0" stroke-width=".8"/></svg>
<span style='left:58.00px;top:111.00px;color:#000;font:10.8px "Liberation Sans", sans-serif;line-height:15px;transform:translateY(0.97px) scaleX(1.0795);transform-origin:0 50%;'>motion</span>
<svg style="left:26px;top:114.76px;" width="5.5" height="9" viewBox="0 0 5.5 9" preserveAspectRatio="none"><path d="M.6 .8 L4.6 4.5 L.6 8.2 Z" fill="#fff" stroke="#a5a5a5" stroke-width=".9"/></svg>
<svg style="left:38.3px;top:129.39px;" width="14.504" height="10.975999999999999" viewBox="0 0 14.8 11.2" preserveAspectRatio="none"><defs><linearGradient id="fg" x1="0" y1="0" x2="0" y2="1"><stop offset="0" stop-color="#fff4b4"/><stop offset="1" stop-color="#f8d258"/></linearGradient></defs>
<path d="M.9 10 V1.7 Q.9 .8 1.8 .8 H4.6 Q5.4 .8 5.8 1.5 L6.2 2.1 H11.6 Q12.5 2.1 12.5 3 V5" fill="#f8dc86" stroke="#dba03a" stroke-width="1.1"/><path d="M2.2 4.6 V2.6 H11.2 V4.6" fill="#fffdf0" stroke="none"/>
<path d="M.9 10.5 L3 5 H14.1 L12 10.5 Z" fill="url(#fg)" stroke="#dca43e" stroke-width="1.1" stroke-linejoin="round"/><path d="M3.6 6.1 H12.8" stroke="#fffbe0" stroke-width=".8"/></svg>
<span style='left:58.00px;top:127.00px;color:#000;font:10.8px "Liberation Sans", sans-serif;line-height:15px;transform:translateY(0.90px) scaleX(0.9844);transform-origin:0 50%;'>Musiques</span>
<svg style="left:26px;top:130.69px;" width="5.5" height="9" viewBox="0 0 5.5 9" preserveAspectRatio="none"><path d="M.6 .8 L4.6 4.5 L.6 8.2 Z" fill="#fff" stroke="#a5a5a5" stroke-width=".9"/></svg>
<svg style="left:38.3px;top:145.32px;" width="14.504" height="10.975999999999999" viewBox="0 0 14.8 11.2" preserveAspectRatio="none"><defs><linearGradient id="fg" x1="0" y1="0" x2="0" y2="1"><stop offset="0" stop-color="#fff4b4"/><stop offset="1" stop-color="#f8d258"/></linearGradient></defs>
<path d="M.9 10 V1.7 Q.9 .8 1.8 .8 H4.6 Q5.4 .8 5.8 1.5 L6.2 2.1 H11.6 Q12.5 2.1 12.5 3 V5" fill="#f8dc86" stroke="#dba03a" stroke-width="1.1"/><path d="M2.2 4.6 V2.6 H11.2 V4.6" fill="#fffdf0" stroke="none"/>
<path d="M.9 10.5 L3 5 H14.1 L12 10.5 Z" fill="url(#fg)" stroke="#dca43e" stroke-width="1.1" stroke-linejoin="round"/><path d="M3.6 6.1 H12.8" stroke="#fffbe0" stroke-width=".8"/></svg>
<span style='left:58.00px;top:143.00px;color:#000;font:10.8px "Liberation Sans", sans-serif;line-height:15px;transform:translateY(0.83px) scaleX(0.9963);transform-origin:0 50%;'>Photos</span>
<svg style="left:26px;top:146.62px;" width="5.5" height="9" viewBox="0 0 5.5 9" preserveAspectRatio="none"><path d="M.6 .8 L4.6 4.5 L.6 8.2 Z" fill="#fff" stroke="#a5a5a5" stroke-width=".9"/></svg>
<svg style="left:38.3px;top:161.25px;" width="14.504" height="10.975999999999999" viewBox="0 0 14.8 11.2" preserveAspectRatio="none"><defs><linearGradient id="fg" x1="0" y1="0" x2="0" y2="1"><stop offset="0" stop-color="#fff4b4"/><stop offset="1" stop-color="#f8d258"/></linearGradient></defs>
<path d="M.9 10 V1.7 Q.9 .8 1.8 .8 H4.6 Q5.4 .8 5.8 1.5 L6.2 2.1 H11.6 Q12.5 2.1 12.5 3 V5" fill="#f8dc86" stroke="#dba03a" stroke-width="1.1"/><path d="M2.2 4.6 V2.6 H11.2 V4.6" fill="#fffdf0" stroke="none"/>
<path d="M.9 10.5 L3 5 H14.1 L12 10.5 Z" fill="url(#fg)" stroke="#dca43e" stroke-width="1.1" stroke-linejoin="round"/><path d="M3.6 6.1 H12.8" stroke="#fffbe0" stroke-width=".8"/></svg>
<span style='left:58.00px;top:159.00px;color:#000;font:10.8px "Liberation Sans", sans-serif;line-height:15px;transform:translateY(0.76px) scaleX(0.9530);transform-origin:0 50%;'>Téléchargements</span>
<svg style="left:26px;top:162.55px;" width="5.5" height="9" viewBox="0 0 5.5 9" preserveAspectRatio="none"><path d="M.6 .8 L4.6 4.5 L.6 8.2 Z" fill="#fff" stroke="#a5a5a5" stroke-width=".9"/></svg>
<svg style="left:38.3px;top:177.18px;" width="14.504" height="10.975999999999999" viewBox="0 0 14.8 11.2" preserveAspectRatio="none"><defs><linearGradient id="fg" x1="0" y1="0" x2="0" y2="1"><stop offset="0" stop-color="#fff4b4"/><stop offset="1" stop-color="#f8d258"/></linearGradient></defs>
<path d="M.9 10 V1.7 Q.9 .8 1.8 .8 H4.6 Q5.4 .8 5.8 1.5 L6.2 2.1 H11.6 Q12.5 2.1 12.5 3 V5" fill="#f8dc86" stroke="#dba03a" stroke-width="1.1"/><path d="M2.2 4.6 V2.6 H11.2 V4.6" fill="#fffdf0" stroke="none"/>
<path d="M.9 10.5 L3 5 H14.1 L12 10.5 Z" fill="url(#fg)" stroke="#dca43e" stroke-width="1.1" stroke-linejoin="round"/><path d="M3.6 6.1 H12.8" stroke="#fffbe0" stroke-width=".8"/></svg>
<span style='left:58.00px;top:175.00px;color:#000;font:10.8px "Liberation Sans", sans-serif;line-height:15px;transform:translateY(0.69px) scaleX(1.0054);transform-origin:0 50%;'>test</span>
<svg style="left:26px;top:178.48px;" width="5.5" height="9" viewBox="0 0 5.5 9" preserveAspectRatio="none"><path d="M.6 .8 L4.6 4.5 L.6 8.2 Z" fill="#fff" stroke="#a5a5a5" stroke-width=".9"/></svg>
<svg style="left:38.3px;top:193.11px;" width="14.504" height="10.975999999999999" viewBox="0 0 14.8 11.2" preserveAspectRatio="none"><defs><linearGradient id="fg" x1="0" y1="0" x2="0" y2="1"><stop offset="0" stop-color="#fff4b4"/><stop offset="1" stop-color="#f8d258"/></linearGradient></defs>
<path d="M.9 10 V1.7 Q.9 .8 1.8 .8 H4.6 Q5.4 .8 5.8 1.5 L6.2 2.1 H11.6 Q12.5 2.1 12.5 3 V5" fill="#f8dc86" stroke="#dba03a" stroke-width="1.1"/><path d="M2.2 4.6 V2.6 H11.2 V4.6" fill="#fffdf0" stroke="none"/>
<path d="M.9 10.5 L3 5 H14.1 L12 10.5 Z" fill="url(#fg)" stroke="#dca43e" stroke-width="1.1" stroke-linejoin="round"/><path d="M3.6 6.1 H12.8" stroke="#fffbe0" stroke-width=".8"/></svg>
<span style='left:58.00px;top:191.00px;color:#000;font:10.8px "Liberation Sans", sans-serif;line-height:15px;transform:translateY(0.62px) scaleX(0.9595);transform-origin:0 50%;'>Vidéos</span>
<svg style="left:26px;top:194.41px;" width="5.5" height="9" viewBox="0 0 5.5 9" preserveAspectRatio="none"><path d="M.6 .8 L4.6 4.5 L.6 8.2 Z" fill="#fff" stroke="#a5a5a5" stroke-width=".9"/></svg>
<span style='left:183.80px;top:43.00px;color:#838383;font:10.6px "Liberation Sans", sans-serif;line-height:15px;transform:translateY(0.16px) scaleX(0.8588);transform-origin:0 50%;-webkit-text-stroke:.12px;'>Disque dur</span>
<div style="left:179px;top:63.8px;width:527px;height:448px;background:#fff;border:1px solid #828790"></div>
<div class="hd" style="left:180px;top:64.8px;width:525px;height:19px;"></div>
<span style='left:183.80px;top:67.00px;color:#000;font:10.8px "Liberation Sans", sans-serif;line-height:15px;transform:translateY(0.61px) scaleX(1.0089);transform-origin:0 50%;'>Nom</span>
<span style='left:510.70px;top:67.00px;color:#000;font:10.8px "Liberation Sans", sans-serif;line-height:15px;transform:translateY(0.61px) scaleX(0.9346);transform-origin:0 50%;'>Taille</span>
<span style='left:598.20px;top:67.00px;color:#000;font:10.8px "Liberation Sans", sans-serif;line-height:15px;transform:translateY(0.61px) scaleX(0.9986);transform-origin:0 50%;'>Date de modification</span>
<div style="left:180px;top:84.9px;width:525px;height:21.22px;background:#fff;border-bottom:1px solid #dcdcdc"></div>
<svg style="left:182.3px;top:89.05px;" width="14.652000000000001" height="11.088" viewBox="0 0 14.8 11.2" preserveAspectRatio="none"><defs><linearGradient id="fg" x1="0" y1="0" x2="0" y2="1"><stop offset="0" stop-color="#fff4b4"/><stop offset="1" stop-color="#f8d258"/></linearGradient></defs>
<path d="M.9 10 V1.7 Q.9 .8 1.8 .8 H4.6 Q5.4 .8 5.8 1.5 L6.2 2.1 H11.6 Q12.5 2.1 12.5 3 V5" fill="#f8dc86" stroke="#dba03a" stroke-width="1.1"/><path d="M2.2 4.6 V2.6 H11.2 V4.6" fill="#fffdf0" stroke="none"/>
<path d="M.9 10.5 L3 5 H14.1 L12 10.5 Z" fill="url(#fg)" stroke="#dca43e" stroke-width="1.1" stroke-linejoin="round"/><path d="M3.6 6.1 H12.8" stroke="#fffbe0" stroke-width=".8"/></svg>
<span style='left:202.00px;top:88.00px;color:#000;font:10.8px "Liberation Sans", sans-serif;line-height:15px;transform:translateY(0.41px) scaleX(0.8572);transform-origin:0 50%;'>aa</span>
<span style='left:509.00px;top:88.00px;color:#000;font:10.8px "Liberation Sans", sans-serif;line-height:15px;transform:translateY(0.41px) scaleX(0.9637);transform-origin:0 50%;'>0 élément</span>
<span style='left:597.60px;top:88.00px;color:#000;font:10.8px "Liberation Sans", sans-serif;line-height:15px;transform:translateY(0.41px) scaleX(0.9219);transform-origin:0 50%;'>30/08/2013 23:48</span>
<div style="left:180px;top:106.12px;width:525px;height:21.22px;background:#f6f6f6;border-bottom:1px solid #dcdcdc"></div>
<svg style="left:182.3px;top:110.27px;" width="14.652000000000001" height="11.088" viewBox="0 0 14.8 11.2" preserveAspectRatio="none"><defs><linearGradient id="fg" x1="0" y1="0" x2="0" y2="1"><stop offset="0" stop-color="#fff4b4"/><stop offset="1" stop-color="#f8d258"/></linearGradient></defs>
<path d="M.9 10 V1.7 Q.9 .8 1.8 .8 H4.6 Q5.4 .8 5.8 1.5 L6.2 2.1 H11.6 Q12.5 2.1 12.5 3 V5" fill="#f8dc86" stroke="#dba03a" stroke-width="1.1"/><path d="M2.2 4.6 V2.6 H11.2 V4.6" fill="#fffdf0" stroke="none"/>
<path d="M.9 10.5 L3 5 H14.1 L12 10.5 Z" fill="url(#fg)" stroke="#dca43e" stroke-width="1.1" stroke-linejoin="round"/><path d="M3.6 6.1 H12.8" stroke="#fffbe0" stroke-width=".8"/></svg>
<span style='left:202.00px;top:109.00px;color:#000;font:10.8px "Liberation Sans", sans-serif;line-height:15px;transform:translateY(0.63px) scaleX(0.9539);transform-origin:0 50%;'>Enregistrements</span>
<span style='left:509.00px;top:109.00px;color:#000;font:10.8px "Liberation Sans", sans-serif;line-height:15px;transform:translateY(0.63px) scaleX(0.9637);transform-origin:0 50%;'>9 élément</span>
<span style='left:597.60px;top:109.00px;color:#000;font:10.8px "Liberation Sans", sans-serif;line-height:15px;transform:translateY(0.63px) scaleX(0.9219);transform-origin:0 50%;'>17/09/2013 20:45</span>
<div style="left:180px;top:127.34px;width:525px;height:21.22px;background:#fff;border-bottom:1px solid #dcdcdc"></div>
<svg style="left:182.3px;top:131.49px;" width="14.652000000000001" height="11.088" viewBox="0 0 14.8 11.2" preserveAspectRatio="none"><defs><linearGradient id="fg" x1="0" y1="0" x2="0" y2="1"><stop offset="0" stop-color="#fff4b4"/><stop offset="1" stop-color="#f8d258"/></linearGradient></defs>
<path d="M.9 10 V1.7 Q.9 .8 1.8 .8 H4.6 Q5.4 .8 5.8 1.5 L6.2 2.1 H11.6 Q12.5 2.1 12.5 3 V5" fill="#f8dc86" stroke="#dba03a" stroke-width="1.1"/><path d="M2.2 4.6 V2.6 H11.2 V4.6" fill="#fffdf0" stroke="none"/>
<path d="M.9 10.5 L3 5 H14.1 L12 10.5 Z" fill="url(#fg)" stroke="#dca43e" stroke-width="1.1" stroke-linejoin="round"/><path d="M3.6 6.1 H12.8" stroke="#fffbe0" stroke-width=".8"/></svg>
<span style='left:202.00px;top:130.00px;color:#000;font:10.8px "Liberation Sans", sans-serif;line-height:15px;transform:translateY(0.85px) scaleX(1.0795);transform-origin:0 50%;'>motion</span>
<span style='left:509.00px;top:130.00px;color:#000;font:10.8px "Liberation Sans", sans-serif;line-height:15px;transform:translateY(0.85px) scaleX(0.9637);transform-origin:0 50%;'>1 élément</span>
<span style='left:597.60px;top:130.00px;color:#000;font:10.8px "Liberation Sans", sans-serif;line-height:15px;transform:translateY(0.85px) scaleX(0.9219);transform-origin:0 50%;'>24/09/2013 21:08</span>
<div style="left:180px;top:148.56px;width:525px;height:21.22px;background:#f6f6f6;border-bottom:1px solid #dcdcdc"></div>
<svg style="left:182.3px;top:152.71px;" width="14.652000000000001" height="11.088" viewBox="0 0 14.8 11.2" preserveAspectRatio="none"><defs><linearGradient id="fg" x1="0" y1="0" x2="0" y2="1"><stop offset="0" stop-color="#fff4b4"/><stop offset="1" stop-color="#f8d258"/></linearGradient></defs>
<path d="M.9 10 V1.7 Q.9 .8 1.8 .8 H4.6 Q5.4 .8 5.8 1.5 L6.2 2.1 H11.6 Q12.5 2.1 12.5 3 V5" fill="#f8dc86" stroke="#dba03a" stroke-width="1.1"/><path d="M2.2 4.6 V2.6 H11.2 V4.6" fill="#fffdf0" stroke="none"/>
<path d="M.9 10.5 L3 5 H14.1 L12 10.5 Z" fill="url(#fg)" stroke="#dca43e" stroke-width="1.1" stroke-linejoin="round"/><path d="M3.6 6.1 H12.8" stroke="#fffbe0" stroke-width=".8"/></svg>
<span style='left:202.00px;top:152.00px;color:#000;font:10.8px "Liberation Sans", sans-serif;line-height:15px;transform:translateY(0.07px) scaleX(0.9844);transform-origin:0 50%;'>Musiques</span>
<span style='left:509.00px;top:152.00px;color:#000;font:10.8px "Liberation Sans", sans-serif;line-height:15px;transform:translateY(0.07px) scaleX(0.9637);transform-origin:0 50%;'>2 élément</span>
<span style='left:597.60px;top:152.00px;color:#000;font:10.8px "Liberation Sans", sans-serif;line-height:15px;transform:translateY(0.07px) scaleX(0.9219);transform-origin:0 50%;'>30/08/2013 23:59</span>
<div style="left:180px;top:169.78px;width:525px;height:21.22px;background:#fff;border-bottom:1px solid #dcdcdc"></div>
<svg style="left:182.3px;top:173.93px;" width="14.652000000000001" height="11.088" viewBox="0 0 14.8 11.2" preserveAspectRatio="none"><defs><linearGradient id="fg" x1="0" y1="0" x2="0" y2="1"><stop offset="0" stop-color="#fff4b4"/><stop offset="1" stop-color="#f8d258"/></linearGradient></defs>
<path d="M.9 10 V1.7 Q.9 .8 1.8 .8 H4.6 Q5.4 .8 5.8 1.5 L6.2 2.1 H11.6 Q12.5 2.1 12.5 3 V5" fill="#f8dc86" stroke="#dba03a" stroke-width="1.1"/><path d="M2.2 4.6 V2.6 H11.2 V4.6" fill="#fffdf0" stroke="none"/>
<path d="M.9 10.5 L3 5 H14.1 L12 10.5 Z" fill="url(#fg)" stroke="#dca43e" stroke-width="1.1" stroke-linejoin="round"/><path d="M3.6 6.1 H12.8" stroke="#fffbe0" stroke-width=".8"/></svg>
<span style='left:202.00px;top:173.00px;color:#000;font:10.8px "Liberation Sans", sans-serif;line-height:15px;transform:translateY(0.29px) scaleX(0.9963);transform-origin:0 50%;'>Photos</span>
<span style='left:509.00px;top:173.00px;color:#000;font:10.8px "Liberation Sans", sans-serif;line-height:15px;transform:translateY(0.29px) scaleX(0.9637);transform-origin:0 50%;'>3 élément</span>
<span style='left:597.60px;top:173.00px;color:#000;font:10.8px "Liberation Sans", sans-serif;line-height:15px;transform:translateY(0.29px) scaleX(0.9350);transform-origin:0 50%;'>02/10/2013 18:41</span>
<div style="left:180px;top:191.0px;width:525px;height:21.22px;background:#f6f6f6;border-bottom:1px solid #dcdcdc"></div>
<svg style="left:182.3px;top:195.15px;" width="14.652000000000001" height="11.088" viewBox="0 0 14.8 11.2" preserveAspectRatio="none"><defs><linearGradient id="fg" x1="0" y1="0" x2="0" y2="1"><stop offset="0" stop-color="#fff4b4"/><stop offset="1" stop-color="#f8d258"/></linearGradient></defs>
<path d="M.9 10 V1.7 Q.9 .8 1.8 .8 H4.6 Q5.4 .8 5.8 1.5 L6.2 2.1 H11.6 Q12.5 2.1 12.5 3 V5" fill="#f8dc86" stroke="#dba03a" stroke-width="1.1"/><path d="M2.2 4.6 V2.6 H11.2 V4.6" fill="#fffdf0" stroke="none"/>
<path d="M.9 10.5 L3 5 H14.1 L12 10.5 Z" fill="url(#fg)" stroke="#dca43e" stroke-width="1.1" stroke-linejoin="round"/><path d="M3.6 6.1 H12.8" stroke="#fffbe0" stroke-width=".8"/></svg>
<span style='left:202.00px;top:194.00px;color:#000;font:10.8px "Liberation Sans", sans-serif;line-height:15px;transform:translateY(0.51px) scaleX(0.9530);transform-origin:0 50%;'>Téléchargements</span>
<span style='left:509.00px;top:194.00px;color:#000;font:10.8px "Liberation Sans", sans-serif;line-height:15px;transform:translateY(0.51px) scaleX(0.9637);transform-origin:0 50%;'>1 élément</span>
<span style='left:597.60px;top:194.00px;color:#000;font:10.8px "Liberation Sans", sans-serif;line-height:15px;transform:translateY(0.51px) scaleX(0.9350);transform-origin:0 50%;'>02/10/2013 00:05</span>
<div style="left:180px;top:212.22px;width:525px;height:21.22px;background:#fff;border-bottom:1px solid #dcdcdc"></div>
<svg style="left:182.3px;top:216.37px;" width="14.652000000000001" height="11.088" viewBox="0 0 14.8 11.2" preserveAspectRatio="none"><defs><linearGradient id="fg" x1="0" y1="0" x2="0" y2="1"><stop offset="0" stop-color="#fff4b4"/><stop offset="1" stop-color="#f8d258"/></linearGradient></defs>
<path d="M.9 10 V1.7 Q.9 .8 1.8 .8 H4.6 Q5.4 .8 5.8 1.5 L6.2 2.1 H11.6 Q12.5 2.1 12.5 3 V5" fill="#f8dc86" stroke="#dba03a" stroke-width="1.1"/><path d="M2.2 4.6 V2.6 H11.2 V4.6" fill="#fffdf0" stroke="none"/>
<path d="M.9 10.5 L3 5 H14.1 L12 10.5 Z" fill="url(#fg)" stroke="#dca43e" stroke-width="1.1" stroke-linejoin="round"/><path d="M3.6 6.1 H12.8" stroke="#fffbe0" stroke-width=".8"/></svg>
<span style='left:202.00px;top:215.00px;color:#000;font:10.8px "Liberation Sans", sans-serif;line-height:15px;transform:translateY(0.73px) scaleX(1.0054);transform-origin:0 50%;'>test</span>
<span style='left:509.00px;top:215.00px;color:#000;font:10.8px "Liberation Sans", sans-serif;line-height:15px;transform:translateY(0.73px) scaleX(0.9637);transform-origin:0 50%;'>0 élément</span>
<span style='left:597.60px;top:215.00px;color:#000;font:10.8px "Liberation Sans", sans-serif;line-height:15px;transform:translateY(0.73px) scaleX(0.9350);transform-origin:0 50%;'>21/09/2013 14:12</span>
<div style="left:180px;top:233.44px;width:525px;height:21.22px;background:#f6f6f6;border-bottom:1px solid #dcdcdc"></div>
<svg style="left:182.3px;top:237.59px;" width="14.652000000000001" height="11.088" viewBox="0 0 14.8 11.2" preserveAspectRatio="none"><defs><linearGradient id="fg" x1="0" y1="0" x2="0" y2="1"><stop offset="0" stop-color="#fff4b4"/><stop offset="1" stop-color="#f8d258"/></linearGradient></defs>
<path d="M.9 10 V1.7 Q.9 .8 1.8 .8 H4.6 Q5.4 .8 5.8 1.5 L6.2 2.1 H11.6 Q12.5 2.1 12.5 3 V5" fill="#f8dc86" stroke="#dba03a" stroke-width="1.1"/><path d="M2.2 4.6 V2.6 H11.2 V4.6" fill="#fffdf0" stroke="none"/>
<path d="M.9 10.5 L3 5 H14.1 L12 10.5 Z" fill="url(#fg)" stroke="#dca43e" stroke-width="1.1" stroke-linejoin="round"/><path d="M3.6 6.1 H12.8" stroke="#fffbe0" stroke-width=".8"/></svg>
<span style='left:202.00px;top:236.00px;color:#000;font:10.8px "Liberation Sans", sans-serif;line-height:15px;transform:translateY(0.95px) scaleX(0.9595);transform-origin:0 50%;'>Vidéos</span>
<span style='left:509.00px;top:236.00px;color:#000;font:10.8px "Liberation Sans", sans-serif;line-height:15px;transform:translateY(0.95px) scaleX(0.9637);transform-origin:0 50%;'>2 élément</span>
<span style='left:597.60px;top:236.00px;color:#000;font:10.8px "Liberation Sans", sans-serif;line-height:15px;transform:translateY(0.95px) scaleX(0.9350);transform-origin:0 50%;'>30/08/2013 23:59</span>
<div style="left:180px;top:254.66px;width:525px;height:21.22px;background:#fff;border-bottom:1px solid #dcdcdc"></div>
<svg style="left:184px;top:257.86px;" width="12" height="12.8" viewBox="0 0 12 12.8" preserveAspectRatio="none"><path d="M.5 .5 H11.3 V9.4 L8.4 12.3 H.5 Z" fill="#f3f3f3" stroke="#cfcfcf" stroke-width=".9"/><path d="M8.4 12.3 V9.4 H11.3" fill="#fff" stroke="#cfcfcf" stroke-width=".7"/><path d="M3.2 2.6 Q4.6 5.4 9.4 6.4 Q5.2 6.8 3 9.8 Q4.6 6 3.2 2.6 Z" fill="none" stroke="#e23a44" stroke-width=".95" stroke-linejoin="round"/></svg>
<span style='left:202.00px;top:258.00px;color:#000;font:10.8px "Liberation Sans", sans-serif;line-height:15px;transform:translateY(0.17px) scaleX(0.9002);transform-origin:0 50%;'>2012_JRG7_ANCA.pdf</span>
<span style='left:509.00px;top:258.00px;color:#000;font:10.8px "Liberation Sans", sans-serif;line-height:15px;transform:translateY(0.17px) scaleX(0.9600);transform-origin:0 50%;'>1.20 MB</span>
<span style='left:597.60px;top:258.00px;color:#000;font:10.8px "Liberation Sans", sans-serif;line-height:15px;transform:translateY(0.17px) scaleX(0.9350);transform-origin:0 50%;'>12/09/2013 10:02</span>
<div style="left:180px;top:275.88px;width:525px;height:21.22px;background:#f6f6f6;border-bottom:1px solid #dcdcdc"></div>
<svg style="left:184px;top:279.58px;" width="12" height="12.6" viewBox="0 0 12 12.6" preserveAspectRatio="none"><path d="M.5 .5 H11.3 V9.2 L8.4 12.1 H.5 Z" fill="#f4f4f4" stroke="#c8c8c8" stroke-width=".9"/><path d="M1.6 1.3 H10.3 V8.6 L8 10.6 H1.6 Z" fill="#2a6be0"/><path d="M1.6 1.3 H8.6 L7.4 5.2 L5.6 6 L4.8 10 L4.2 6 L2.4 5.6 Z" fill="#8f1c72"/><circle cx="4.2" cy="3" r="1.5" fill="#c4268a"/><circle cx="6.8" cy="2.8" r="1.2" fill="#d8405e"/><path d="M5 5.6 L5 9.6" stroke="#1d2a3a" stroke-width=".9"/></svg>
<span style='left:202.00px;top:279.00px;color:#000;font:10.8px "Liberation Sans", sans-serif;line-height:15px;transform:translateY(0.39px) scaleX(0.8932);transform-origin:0 50%;'>20121016_223303.jpg</span>
<span style='left:509.00px;top:279.00px;color:#000;font:10.8px "Liberation Sans", sans-serif;line-height:15px;transform:translateY(0.39px) scaleX(0.9600);transform-origin:0 50%;'>2.31 MB</span>
<span style='left:597.60px;top:279.00px;color:#000;font:10.8px "Liberation Sans", sans-serif;line-height:15px;transform:translateY(0.39px) scaleX(0.9350);transform-origin:0 50%;'>12/09/2013 10:02</span>
<div style="left:180px;top:297.1px;width:525px;height:21.22px;background:#fff;border-bottom:1px solid #dcdcdc"></div>
<svg style="left:184px;top:300.8px;" width="12" height="12.6" viewBox="0 0 12 12.6" preserveAspectRatio="none"><path d="M.5 .5 H11.3 V9.2 L8.4 12.1 H.5 Z" fill="#f4f4f4" stroke="#c8c8c8" stroke-width=".9"/><path d="M1.6 1.3 H10.3 V8.6 L8 10.6 H1.6 Z" fill="#2a6be0"/><path d="M1.6 1.3 H8.6 L7.4 5.2 L5.6 6 L4.8 10 L4.2 6 L2.4 5.6 Z" fill="#8f1c72"/><circle cx="4.2" cy="3" r="1.5" fill="#c4268a"/><circle cx="6.8" cy="2.8" r="1.2" fill="#d8405e"/><path d="M5 5.6 L5 9.6" stroke="#1d2a3a" stroke-width=".9"/></svg>
<span style='left:202.00px;top:300.00px;color:#000;font:10.8px "Liberation Sans", sans-serif;line-height:15px;transform:translateY(0.61px) scaleX(0.8932);transform-origin:0 50%;'>20121018_185344.jpg</span>
<span style='left:509.00px;top:300.00px;color:#000;font:10.8px "Liberation Sans", sans-serif;line-height:15px;transform:translateY(0.61px) scaleX(0.9600);transform-origin:0 50%;'>2.12 MB</span>
<span style='left:597.60px;top:300.00px;color:#000;font:10.8px "Liberation Sans", sans-serif;line-height:15px;transform:translateY(0.61px) scaleX(0.9350);transform-origin:0 50%;'>12/09/2013 10:02</span>
<div style="left:180px;top:318.32px;width:525px;height:21.22px;background:#f6f6f6;border-bottom:1px solid #dcdcdc"></div>
<svg style="left:183.6px;top:323.62px;" width="12.6" height="10" viewBox="0 0 12.6 10" preserveAspectRatio="none"><path d="M.4 .4 H12.2 V7 L9.8 9.6 H.4 Z" fill="#2a6de2"/><path d="M.4 .4 H8.4 L7 4.6 L5.2 5.4 L4.6 9 L4 5.4 L1.6 5 Z" fill="#8a1c74"/><circle cx="3.4" cy="2.4" r="1.5" fill="#c4268a"/><circle cx="6.2" cy="2.2" r="1.2" fill="#dc4664"/><path d="M4.7 5 L4.7 9" stroke="#1a2233" stroke-width=".9"/><path d="M9.8 9.6 V7 H12.2" fill="#dfe6f4"/></svg>
<span style='left:202.00px;top:321.00px;color:#000;font:10.8px "Liberation Sans", sans-serif;line-height:15px;transform:translateY(0.83px) scaleX(0.9804);transform-origin:0 50%;'>compress.png</span>
<span style='left:509.00px;top:321.00px;color:#000;font:10.8px "Liberation Sans", sans-serif;line-height:15px;transform:translateY(0.83px) scaleX(0.9600);transform-origin:0 50%;'>4.02 KB</span>
<span style='left:597.60px;top:321.00px;color:#000;font:10.8px "Liberation Sans", sans-serif;line-height:15px;transform:translateY(0.83px) scaleX(0.9350);transform-origin:0 50%;'>24/09/2013 21:08</span>
<div style="left:180px;top:339.54px;width:525px;height:21.22px;background:#fff;border-bottom:1px solid #dcdcdc"></div>
<svg style="left:183.6px;top:344.84px;" width="12.6" height="10" viewBox="0 0 12.6 10" preserveAspectRatio="none"><path d="M.4 .4 H12.2 V7 L9.8 9.6 H.4 Z" fill="#2a6de2"/><path d="M.4 .4 H8.4 L7 4.6 L5.2 5.4 L4.6 9 L4 5.4 L1.6 5 Z" fill="#8a1c74"/><circle cx="3.4" cy="2.4" r="1.5" fill="#c4268a"/><circle cx="6.2" cy="2.2" r="1.2" fill="#dc4664"/><path d="M4.7 5 L4.7 9" stroke="#1a2233" stroke-width=".9"/><path d="M9.8 9.6 V7 H12.2" fill="#dfe6f4"/></svg>
<span style='left:202.00px;top:343.00px;color:#000;font:10.8px "Liberation Sans", sans-serif;line-height:15px;transform:translateY(0.05px) scaleX(1.0112);transform-origin:0 50%;'>connect.png</span>
<span style='left:509.00px;top:343.00px;color:#000;font:10.8px "Liberation Sans", sans-serif;line-height:15px;transform:translateY(0.05px) scaleX(0.9600);transform-origin:0 50%;'>3.11 KB</span>
<span style='left:597.60px;top:343.00px;color:#000;font:10.8px "Liberation Sans", sans-serif;line-height:15px;transform:translateY(0.05px) scaleX(0.9350);transform-origin:0 50%;'>24/09/2013 21:08</span>
<div style="left:180px;top:360.76px;width:525px;height:21.22px;background:#f6f6f6;border-bottom:1px solid #dcdcdc"></div>
<svg style="left:183.6px;top:366.06px;" width="12.6" height="10" viewBox="0 0 12.6 10" preserveAspectRatio="none"><path d="M.4 .4 H12.2 V7 L9.8 9.6 H.4 Z" fill="#2a6de2"/><path d="M.4 .4 H8.4 L7 4.6 L5.2 5.4 L4.6 9 L4 5.4 L1.6 5 Z" fill="#8a1c74"/><circle cx="3.4" cy="2.4" r="1.5" fill="#c4268a"/><circle cx="6.2" cy="2.2" r="1.2" fill="#dc4664"/><path d="M4.7 5 L4.7 9" stroke="#1a2233" stroke-width=".9"/><path d="M9.8 9.6 V7 H12.2" fill="#dfe6f4"/></svg>
<span style='left:202.00px;top:364.00px;color:#000;font:10.8px "Liberation Sans", sans-serif;line-height:15px;transform:translateY(0.27px) scaleX(1.0304);transform-origin:0 50%;'>cut.png</span>
<span style='left:509.00px;top:364.00px;color:#000;font:10.8px "Liberation Sans", sans-serif;line-height:15px;transform:translateY(0.27px) scaleX(0.9600);transform-origin:0 50%;'>2.45 KB</span>
<span style='left:597.60px;top:364.00px;color:#000;font:10.8px "Liberation Sans", sans-serif;line-height:15px;transform:translateY(0.27px) scaleX(0.9350);transform-origin:0 50%;'>24/09/2013 21:08</span>
<div style="left:180px;top:381.98px;width:525px;height:21.22px;background:#fff;border-bottom:1px solid #dcdcdc"></div>
<svg style="left:183.6px;top:387.28px;" width="12.6" height="10" viewBox="0 0 12.6 10" preserveAspectRatio="none"><path d="M.4 .4 H12.2 V7 L9.8 9.6 H.4 Z" fill="#2a6de2"/><path d="M.4 .4 H8.4 L7 4.6 L5.2 5.4 L4.6 9 L4 5.4 L1.6 5 Z" fill="#8a1c74"/><circle cx="3.4" cy="2.4" r="1.5" fill="#c4268a"/><circle cx="6.2" cy="2.2" r="1.2" fill="#dc4664"/><path d="M4.7 5 L4.7 9" stroke="#1a2233" stroke-width=".9"/><path d="M9.8 9.6 V7 H12.2" fill="#dfe6f4"/></svg>
<span style='left:202.00px;top:385.00px;color:#000;font:10.8px "Liberation Sans", sans-serif;line-height:15px;transform:translateY(0.49px) scaleX(1.0205);transform-origin:0 50%;'>drop.png</span>
<span style='left:509.00px;top:385.00px;color:#000;font:10.8px "Liberation Sans", sans-serif;line-height:15px;transform:translateY(0.49px) scaleX(0.9600);transform-origin:0 50%;'>2.87 KB</span>
<span style='left:597.60px;top:385.00px;color:#000;font:10.8px "Liberation Sans", sans-serif;line-height:15px;transform:translateY(0.49px) scaleX(0.9350);transform-origin:0 50%;'>24/09/2013 21:08</span>
<div style="left:180px;top:403.2px;width:525px;height:21.22px;background:#f6f6f6;border-bottom:1px solid #dcdcdc"></div>
<svg style="left:183.6px;top:408.5px;" width="12.6" height="10" viewBox="0 0 12.6 10" preserveAspectRatio="none"><path d="M.4 .4 H12.2 V7 L9.8 9.6 H.4 Z" fill="#2a6de2"/><path d="M.4 .4 H8.4 L7 4.6 L5.2 5.4 L4.6 9 L4 5.4 L1.6 5 Z" fill="#8a1c74"/><circle cx="3.4" cy="2.4" r="1.5" fill="#c4268a"/><circle cx="6.2" cy="2.2" r="1.2" fill="#dc4664"/><path d="M4.7 5 L4.7 9" stroke="#1a2233" stroke-width=".9"/><path d="M9.8 9.6 V7 H12.2" fill="#dfe6f4"/></svg>
<span style='left:202.00px;top:406.00px;color:#000;font:10.8px "Liberation Sans", sans-serif;line-height:15px;transform:translateY(0.71px) scaleX(0.9953);transform-origin:0 50%;'>email_authentication.png</span>
<span style='left:509.00px;top:406.00px;color:#000;font:10.8px "Liberation Sans", sans-serif;line-height:15px;transform:translateY(0.71px) scaleX(0.9600);transform-origin:0 50%;'>5.60 KB</span>
<span style='left:597.60px;top:406.00px;color:#000;font:10.8px "Liberation Sans", sans-serif;line-height:15px;transform:translateY(0.71px) scaleX(0.9350);transform-origin:0 50%;'>24/09/2013 21:08</span>
<div style="left:180px;top:424.42px;width:525px;height:21.22px;background:#fff;border-bottom:1px solid #dcdcdc"></div>
<svg style="left:183.6px;top:429.72px;" width="12.6" height="10" viewBox="0 0 12.6 10" preserveAspectRatio="none"><path d="M.4 .4 H12.2 V7 L9.8 9.6 H.4 Z" fill="#2a6de2"/><path d="M.4 .4 H8.4 L7 4.6 L5.2 5.4 L4.6 9 L4 5.4 L1.6 5 Z" fill="#8a1c74"/><circle cx="3.4" cy="2.4" r="1.5" fill="#c4268a"/><circle cx="6.2" cy="2.2" r="1.2" fill="#dc4664"/><path d="M4.7 5 L4.7 9" stroke="#1a2233" stroke-width=".9"/><path d="M9.8 9.6 V7 H12.2" fill="#dfe6f4"/></svg>
<span style='left:202.00px;top:427.00px;color:#000;font:10.8px "Liberation Sans", sans-serif;line-height:15px;transform:translateY(0.93px) scaleX(1.0119);transform-origin:0 50%;'>folder.png</span>
<span style='left:509.00px;top:427.00px;color:#000;font:10.8px "Liberation Sans", sans-serif;line-height:15px;transform:translateY(0.93px) scaleX(0.9600);transform-origin:0 50%;'>1.98 KB</span>
<span style='left:597.60px;top:427.00px;color:#000;font:10.8px "Liberation Sans", sans-serif;line-height:15px;transform:translateY(0.93px) scaleX(0.9350);transform-origin:0 50%;'>24/09/2013 21:08</span>
<div style="left:180px;top:445.64px;width:525px;height:21.22px;background:#f6f6f6;border-bottom:1px solid #dcdcdc"></div>
<svg style="left:184px;top:448.74px;" width="12" height="13" viewBox="0 0 12 13" preserveAspectRatio="none"><path d="M.5 .5 H11.3 V9.6 L8.4 12.5 H.5 Z" fill="#f6f6f6" stroke="#c4c4c4" stroke-width=".9"/><path d="M8.4 12.5 V9.6 H11.3" fill="#fff" stroke="#c4c4c4" stroke-width=".7"/><rect x="2.8" y="4.4" width="6.2" height="5.6" fill="#4a4a4a"/><path d="M2.8 5.9 H9 M2.8 7.3 H9 M2.8 8.7 H9" stroke="#d0d0d0" stroke-width=".6"/><path d="M2.8 4 L8.8 2.6" stroke="#3c3c3c" stroke-width="1.3"/></svg>
<span style='left:202.00px;top:449.00px;color:#000;font:10.8px "Liberation Sans", sans-serif;line-height:15px;transform:translateY(0.15px) scaleX(0.9229);transform-origin:0 50%;'>IMG_2149.MOV</span>
<span style='left:509.00px;top:449.00px;color:#000;font:10.8px "Liberation Sans", sans-serif;line-height:15px;transform:translateY(0.15px) scaleX(0.9600);transform-origin:0 50%;'>12.41 MB</span>
<span style='left:597.60px;top:449.00px;color:#000;font:10.8px "Liberation Sans", sans-serif;line-height:15px;transform:translateY(0.15px) scaleX(0.9350);transform-origin:0 50%;'>01/10/2013 19:27</span>
<div style="left:180px;top:466.86px;width:525px;height:21.22px;background:#fff;border-bottom:1px solid #dcdcdc"></div>
<svg style="left:184px;top:469.96px;" width="12" height="13" viewBox="0 0 12 13" preserveAspectRatio="none"><path d="M.5 .5 H11.3 V9.6 L8.4 12.5 H.5 Z" fill="#f6f6f6" stroke="#c4c4c4" stroke-width=".9"/><path d="M8.4 12.5 V9.6 H11.3" fill="#fff" stroke="#c4c4c4" stroke-width=".7"/><rect x="2.8" y="4.4" width="6.2" height="5.6" fill="#4a4a4a"/><path d="M2.8 5.9 H9 M2.8 7.3 H9 M2.8 8.7 H9" stroke="#d0d0d0" stroke-width=".6"/><path d="M2.8 4 L8.8 2.6" stroke="#3c3c3c" stroke-width="1.3"/></svg>
<span style='left:202.00px;top:470.00px;color:#000;font:10.8px "Liberation Sans", sans-serif;line-height:15px;transform:translateY(0.37px) scaleX(1.0169);transform-origin:0 50%;'>Wildlife.wmv</span>
<span style='left:509.00px;top:470.00px;color:#000;font:10.8px "Liberation Sans", sans-serif;line-height:15px;transform:translateY(0.37px) scaleX(0.9600);transform-origin:0 50%;'>25.03 MB</span>
<span style='left:597.60px;top:470.00px;color:#000;font:10.8px "Liberation Sans", sans-serif;line-height:15px;transform:translateY(0.37px) scaleX(0.9219);transform-origin:0 50%;'>02/10/2013 00:18</span>
<div style="left:506.3px;top:65px;width:1px;height:404px;background:#e3e5ea"></div>
<div style="left:594.4px;top:65px;width:1px;height:404px;background:#e3e5ea"></div>
<div style="left:506.3px;top:84px;width:1px;height:403.5px;background:#dcdcdc"></div>
<div style="left:594.4px;top:84px;width:1px;height:403.5px;background:#dcdcdc"></div>
<svg style="left:677.5px;top:517px;" width="9" height="9" viewBox="0 0 9 9" preserveAspectRatio="none"><defs><radialGradient id="gd" cx=".45" cy=".4" r=".6"><stop offset="0" stop-color="#a6e040"/><stop offset="1" stop-color="#6fb51e"/></radialGradient></defs><circle cx="4.5" cy="4.5" r="3.1" fill="url(#gd)" stroke="#5a9c1a" stroke-width=".9"/></svg>
<div style="left:691px;top:515px;width:1px;height:13px;background:#d8d8d8"></div>
<div style="left:692px;top:515px;width:1px;height:13px;background:#fff"></div>
<svg style="left:697px;top:520px;" width="9" height="9" viewBox="0 0 9 9" preserveAspectRatio="none"><g fill="#c4c4c4"><rect x="6" y="0" width="2" height="2"/><rect x="3" y="3" width="2" height="2"/><rect x="6" y="3" width="2" height="2"/><rect x="0" y="6" width="2" height="2"/><rect x="3" y="6" width="2" height="2"/><rect x="6" y="6" width="2" height="2"/></g></svg>
</div>
</div>
<div class="win" style="left:620px;top:367px;width:370px;height:291px;">
<svg style="left:9.6px;top:9.4px;" width="11.4" height="8.8" viewBox="0 0 11.4 8.8" preserveAspectRatio="none"><defs><linearGradient id="tf" x1="0" y1="0" x2="0" y2="1"><stop offset="0" stop-color="#f6f6f6"/><stop offset="1" stop-color="#b9b9b9"/></linearGradient></defs><path d="M.3 8 L.5 1.2 L5 .3 L11 .9 L10.6 2 L2 3 Z" fill="#dba548"/><path d="M.8 8.4 L2 2.6 L10.9 1.6 L10.2 7 Z" fill="url(#tf)" stroke="#c9c9c9" stroke-width=".4"/></svg>
<span style='left:26.00px;top:7.00px;color:#5a5a5a;font:10.8px "Liberation Sans", sans-serif;line-height:15px;transform:translateY(0.61px) scaleX(0.9685);transform-origin:0 50%;'>A propos...</span>
<div class="cb" style="left:304.5px;top:7px;width:26.5px;height:14.5px;"></div>
<span style='left:313.93px;top:5.00px;color:#f4f5f7;font:bold 12.5px "Liberation Sans", sans-serif;line-height:18px;transform:translateY(0.30px) scaleX(1.0000);transform-origin:50% 50%;text-shadow:-1px 0 #4a4f57,1px 0 #4a4f57,0 -1px #4a4f57,0 1px #4a4f57;'>?</span>
<div class="cb" style="left:333.2px;top:7px;width:27.5px;height:14.5px;"></div>
<svg style="left:340.95px;top:9.6px;" width="12" height="9.4" viewBox="0 0 12 9.4" preserveAspectRatio="none"><path d="M2.9 2 L9.1 7.4 M9.1 2 L2.9 7.4" stroke="#4a4f57" stroke-width="3.6" stroke-linecap="round"/><path d="M2.9 2 L9.1 7.4 M9.1 2 L2.9 7.4" stroke="#f6f7f9" stroke-width="1.7" stroke-linecap="round"/></svg>
<div class="cl" style="left:6px;top:25px;width:356px;height:258.4px;">
<div style="left:0px;top:0px;width:356px;height:59px;background:linear-gradient(#fff 0,#fafafa 35%,#ebebeb 100%);border-bottom:1px solid #bdbdbd"></div>
<span style='left:11.00px;top:10.00px;color:#c8102e;font:italic 23px "Liberation Serif", serif;line-height:32px;transform:translateY(0.18px) scaleX(1.6587);transform-origin:0 50%;-webkit-text-stroke:0;'>freebox</span>
<span style='left:63.00px;top:32.00px;color:#3a3a3a;font:14px "DejaVu Sans", "Liberation Sans", sans-serif;line-height:20px;transform:translateY(0.84px) scaleX(1.0390);transform-origin:0 50%;'>Desktop</span>
<span style='left:306.89px;top:31.00px;color:#c3c3c3;font:10.6px "DejaVu Sans", "Liberation Sans", sans-serif;line-height:15px;transform:translateY(0.36px) scaleX(0.8162);transform-origin:100% 50%;-webkit-text-stroke:.12px;'>beta 0.1</span>
<span style='left:229.67px;top:42.00px;color:#c3c3c3;font:10.6px "Liberation Sans", sans-serif;line-height:15px;transform:translateY(0.56px) scaleX(0.8984);transform-origin:100% 50%;-webkit-text-stroke:.12px;'>Copyright 2013 labsquare</span>
<div style="left:1px;top:82.4px;width:353.6px;height:175.4px;background:#fff;border:1px solid #898c95"></div>
<div style="left:2px;top:67.5px;width:72px;height:15.2px;background:linear-gradient(#f2f2f2,#ebebeb 50%,#dddddd 51%,#cfcfcf);border:1px solid #898c95;border-bottom:none;border-radius:2px 2px 0 0"></div>
<span style='left:10.50px;top:67.00px;color:#000;font:10.6px "Liberation Sans", sans-serif;line-height:15px;transform:translateY(0.96px) scaleX(0.9126);transform-origin:0 50%;-webkit-text-stroke:.12px;'>Contributeur</span>
<div style="left:73.7px;top:65px;width:54px;height:18.4px;background:#fff;border:1px solid #898c95;border-bottom:none;border-radius:2px 2px 0 0"></div>
<span style='left:85.00px;top:66.00px;color:#000;font:10.6px "Liberation Sans", sans-serif;line-height:15px;transform:translateY(0.96px) scaleX(0.8490);transform-origin:0 50%;-webkit-text-stroke:.12px;'>Licence</span>
<div class="" style="left:2px;top:83px;width:336px;height:172.4px;background:#fff;overflow:hidden">
<span style='left:3.80px;top:6.00px;color:#000;font:bold 10.6px "Liberation Sans", sans-serif;line-height:15px;transform:translateY(0.36px) scaleX(0.9656);transform-origin:0 50%;-webkit-text-stroke:.12px;'>GNU GENERAL PUBLIC LICENSE</span>
<span style='left:3.80px;top:28.00px;color:#000;font:10.6px "Liberation Sans", sans-serif;line-height:15px;transform:translateY(0.86px) scaleX(0.8927);transform-origin:0 50%;-webkit-text-stroke:.12px;'>Version 3, 29 June 2007</span>
<span style='left:3.80px;top:50.00px;color:#000;font:10.6px "Liberation Sans", sans-serif;line-height:15px;transform:translateY(0.76px) scaleX(0.9209);transform-origin:0 50%;-webkit-text-stroke:.12px;'>Copyright © 2007 Free Software Foundation, Inc</span>
<span style='left:3.80px;top:72.00px;color:#000;font:10.6px "Liberation Sans", sans-serif;line-height:15px;transform:translateY(0.76px) scaleX(0.9034);transform-origin:0 50%;-webkit-text-stroke:.12px;'>Everyone is permitted to copy and distribute verbatim copies of this license</span>
<span style='left:3.80px;top:84.00px;color:#000;font:10.6px "Liberation Sans", sans-serif;line-height:15px;transform:translateY(0.56px) scaleX(0.9064);transform-origin:0 50%;-webkit-text-stroke:.12px;'>document, but changing it is not allowed.</span>
<span style='left:3.80px;top:107.00px;color:#000;font:bold 12.4px "Liberation Sans", sans-serif;line-height:17px;transform:translateY(0.82px) scaleX(0.9499);transform-origin:0 50%;'>Preamble</span>
<span style='left:3.80px;top:131.00px;color:#000;font:10.6px "Liberation Sans", sans-serif;line-height:15px;transform:translateY(0.96px) scaleX(0.8872);transform-origin:0 50%;-webkit-text-stroke:.12px;'>The GNU General Public License is a free, copyleft license for software and</span>
<span style='left:3.80px;top:143.00px;color:#000;font:10.6px "Liberation Sans", sans-serif;line-height:15px;transform:translateY(0.36px) scaleX(0.9161);transform-origin:0 50%;-webkit-text-stroke:.12px;'>other kinds of works.</span>
<span style='left:3.80px;top:166.00px;color:#000;font:10.6px "Liberation Sans", sans-serif;line-height:15px;transform:translateY(0.56px) scaleX(0.8873);transform-origin:0 50%;-webkit-text-stroke:.12px;'>The licenses for most software and other practical works are designed to</span>
</div>
<div style="left:337.5px;top:83.4px;width:15.5px;height:172.6px;background:#f0f0f0"></div>
<svg style="left:342px;top:91px;" width="6" height="4" viewBox="0 0 6 4" preserveAspectRatio="none"><path d="M0 4 L3 0 L6 4 Z" fill="#404040"/></svg>
<svg style="left:342px;top:245.3px;" width="6" height="4" viewBox="0 0 6 4" preserveAspectRatio="none"><path d="M0 0 L3 4 L6 0 Z" fill="#404040"/></svg>
<div style="left:337.5px;top:100.8px;width:14px;height:14.5px;background:linear-gradient(90deg,#f6f6f6,#e6e6e6 50%,#d4d4d4);border:1px solid #979797;border-radius:2px"></div>
</div>
</div>
</body></html>
